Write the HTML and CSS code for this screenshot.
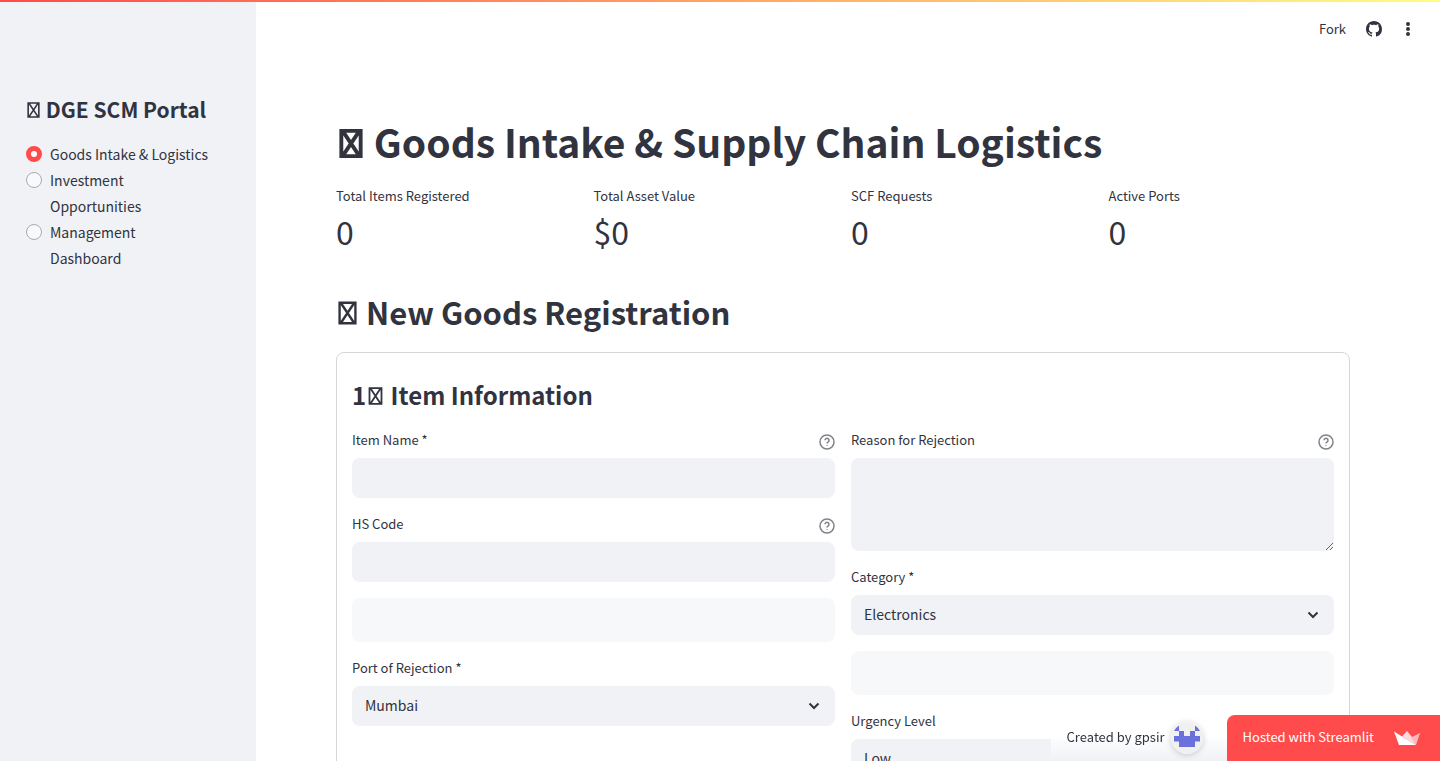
FILE: index.html
```
<!DOCTYPE html>
<html lang="en">
<head>
    <meta charset="UTF-8">
    <meta name="viewport" content="width=device-width, initial-scale=1.0">
    <title>DGE SCM Portal</title>
    <link rel="stylesheet" href="styles.css">
</head>
<body>
    <div class="decoration"></div>
    <div class="app">
        <aside class="sidebar">
            <h2 class="sidebar-title"><svg class="glyph" viewBox="0 0 24 30" aria-hidden="true"><path d="M2 2h20v26H2zM4 3l16 24M20 3L4 27"/></svg> DGE SCM Portal</h2>
            <nav class="nav">
                <label class="nav-item"><input type="radio" name="page" checked><span>Goods Intake &amp; Logistics</span></label>
                <label class="nav-item"><input type="radio" name="page"><span>Investment Opportunities</span></label>
                <label class="nav-item"><input type="radio" name="page"><span>Management Dashboard</span></label>
            </nav>
        </aside>

        <div class="view">
            <header class="toolbar">
                <button class="tool-btn" type="button">Fork</button>
                <a class="tool-link" href="#" aria-label="GitHub">
                    <svg width="16" height="16" viewBox="0 0 16 16" fill="currentColor"><path d="M8 0C3.58 0 0 3.58 0 8c0 3.54 2.29 6.53 5.47 7.59.4.07.55-.17.55-.38 0-.19-.01-.82-.01-1.49-2.01.37-2.53-.49-2.69-.94-.09-.23-.48-.94-.82-1.13-.28-.15-.68-.52-.01-.53.63-.01 1.08.58 1.23.82.72 1.21 1.87.87 2.33.66.07-.52.28-.87.51-1.07-1.78-.2-3.64-.89-3.64-3.95 0-.87.31-1.59.82-2.15-.08-.2-.36-1.02.08-2.12 0 0 .67-.21 2.2.82.64-.18 1.32-.27 2-.27s1.36.09 2 .27c1.53-1.04 2.2-.82 2.2-.82.44 1.1.16 1.92.08 2.12.51.56.82 1.27.82 2.15 0 3.07-1.87 3.75-3.65 3.95.29.25.54.73.54 1.48 0 1.07-.01 1.93-.01 2.2 0 .21.15.46.55.38A8.01 8.01 0 0 0 16 8c0-4.42-3.58-8-8-8z"/></svg>
                </a>
                <button class="tool-btn" type="button" aria-label="Menu">
                    <svg width="12" height="16" viewBox="0 0 12 16" fill="currentColor"><circle cx="6" cy="3" r="2"/><circle cx="6" cy="8" r="2"/><circle cx="6" cy="13" r="2"/></svg>
                </button>
            </header>

            <main class="main">
                <h1><svg class="glyph" viewBox="0 0 24 30" aria-hidden="true"><path d="M2 2h20v26H2zM4 3l16 24M20 3L4 27"/></svg> Goods Intake &amp; Supply Chain Logistics</h1>

                <div class="metrics">
                    <div class="metric">
                        <div class="metric-label">Total Items Registered</div>
                        <div class="metric-value">0</div>
                    </div>
                    <div class="metric">
                        <div class="metric-label">Total Asset Value</div>
                        <div class="metric-value">$0</div>
                    </div>
                    <div class="metric">
                        <div class="metric-label">SCF Requests</div>
                        <div class="metric-value">0</div>
                    </div>
                    <div class="metric">
                        <div class="metric-label">Active Ports</div>
                        <div class="metric-value">0</div>
                    </div>
                </div>

                <h2><svg class="glyph" viewBox="0 0 24 30" aria-hidden="true"><path d="M2 2h20v26H2zM4 3l16 24M20 3L4 27"/></svg> New Goods Registration</h2>

                <form class="form">
                    <h3>1<svg class="glyph" viewBox="0 0 24 30" aria-hidden="true"><path d="M2 2h20v26H2zM4 3l16 24M20 3L4 27"/></svg> Item Information</h3>
                    <div class="columns">
                        <div class="column">
                            <div class="field">
                                <div class="field-head">
                                    <label for="item-name">Item Name *</label>
                                    <svg class="help" viewBox="0 0 16 16"><circle cx="8" cy="8" r="7"/><path d="M6 6.3a2 2 0 1 1 3.2 1.6C8.4 8.4 8 8.7 8 9.5"/><path d="M8 11.2v.9"/></svg>
                                </div>
                                <input class="control" id="item-name" type="text">
                            </div>
                            <div class="field">
                                <div class="field-head">
                                    <label for="hs-code">HS Code</label>
                                    <svg class="help" viewBox="0 0 16 16"><circle cx="8" cy="8" r="7"/><path d="M6 6.3a2 2 0 1 1 3.2 1.6C8.4 8.4 8 8.7 8 9.5"/><path d="M8 11.2v.9"/></svg>
                                </div>
                                <input class="control" id="hs-code" type="text">
                            </div>
                            <div class="placeholder"></div>
                            <div class="field">
                                <div class="field-head"><label for="port">Port of Rejection *</label></div>
                                <div class="select">
                                    <select class="control" id="port"><option>Mumbai</option></select>
                                    <svg class="chevron" viewBox="0 0 12 8"><path d="M1.5 1.5L6 6l4.500-4.500"/></svg>
                                </div>
                            </div>
                        </div>
                        <div class="column">
                            <div class="field">
                                <div class="field-head">
                                    <label for="reason">Reason for Rejection</label>
                                    <svg class="help" viewBox="0 0 16 16"><circle cx="8" cy="8" r="7"/><path d="M6 6.3a2 2 0 1 1 3.2 1.6C8.4 8.4 8 8.7 8 9.5"/><path d="M8 11.2v.9"/></svg>
                                </div>
                                <textarea class="control" id="reason"></textarea>
                            </div>
                            <div class="field">
                                <div class="field-head"><label for="category">Category *</label></div>
                                <div class="select">
                                    <select class="control" id="category"><option>Electronics</option></select>
                                    <svg class="chevron" viewBox="0 0 12 8"><path d="M1.5 1.5L6 6l4.500-4.500"/></svg>
                                </div>
                            </div>
                            <div class="placeholder"></div>
                            <div class="field">
                                <div class="field-head"><label for="urgency">Urgency Level</label></div>
                                <div class="select">
                                    <select class="control" id="urgency"><option>Low</option></select>
                                    <svg class="chevron" viewBox="0 0 12 8"><path d="M1.5 1.5L6 6l4.500-4.500"/></svg>
                                </div>
                            </div>
                        </div>
                    </div>
                </form>
            </main>
        </div>
    </div>

    <div class="badges">
        <a class="creator" href="#">
            <span>Created by gpsir</span>
            <svg class="avatar" viewBox="0 0 32 32">
                <circle cx="16" cy="16" r="16" fill="#f0f0f0"/>
                <path fill="#6a70dc" d="M8 3.5V9H3a15 15 0 0 1 5-5.500zM24 3.5V9h5a15 15 0 0 0-5-5.500zM8 9h5v5h6V9h5v5h5v5.500h-5V25H8v-5.500H3V14h5z"/>
            </svg>
        </a>
        <a class="hosted" href="#">
            <span>Hosted with Streamlit</span>
            <svg width="26" height="16" viewBox="0 0 26 16">
                <path fill="#ffd9de" d="M8 6.500l5-5.500 5 6 4 8z"/>
                <path fill="#ffb8c0" d="M17 7.500L26 3l-4 12z"/>
                <path fill="#fff" d="M0 1.500l8 5L22 15H5z"/>
            </svg>
        </a>
    </div>
</body>
</html>
```
FILE: styles.css
```
* {
    box-sizing: border-box;
}
body {
    margin: 0;
    font-family: "Noto Sans CJK SC", "Noto Sans", sans-serif;
    font-size: 14px;
    line-height: 26px;
    color: #31333f;
    background: white;
}
.decoration {
    position: fixed;
    top: 0;
    left: 0;
    right: 0;
    height: 2px;
    background: linear-gradient(90deg, #ff4b4b, #fffd80);
    z-index: 3;
}
.app {
    display: flex;
    height: 100vh;
}
.glyph {
    width: 19px;
    height: 24px;
    margin: 0 2px;
    fill: none;
    stroke: currentColor;
    stroke-width: 3;
}
.sidebar {
    flex: 0 0 256px;
    padding: 95px 26px 24px;
    background: #f0f2f6;
}
.sidebar-title {
    margin: 0 0 18px;
    font-size: 21px;
    line-height: 28px;
    font-weight: 600;
}
.sidebar-title .glyph {
    width: 13px;
    height: 16px;
    margin: 0 1px;
}
.nav {
    padding-right: 20px;
}
.nav-item {
    display: flex;
    align-items: flex-start;
    gap: 8px;
    cursor: pointer;
}
.nav-item input {
    appearance: none;
    flex: 0 0 16px;
    height: 16px;
    margin: 5px 0 0;
    border: 1px solid #a8aab2;
    border-radius: 50%;
    background: #f9f9fb;
}
.nav-item input:checked {
    border: 5px solid #ff4b4b;
    background: white;
}
.view {
    flex: 1;
    min-width: 0;
    display: flex;
    flex-direction: column;
}
.toolbar {
    display: flex;
    align-items: center;
    justify-content: flex-end;
    gap: 20px;
    flex: 0 0 60px;
    padding: 0 26px 2px;
}
.tool-btn,
.tool-link {
    display: flex;
    align-items: center;
    padding: 0;
    border: none;
    background: none;
    color: inherit;
    font: inherit;
    font-size: 13px;
    cursor: pointer;
}
.main {
    flex: 1;
    min-height: 0;
    padding: 55px 90px 40px 80px;
    overflow-y: auto;
    scrollbar-width: none;
}
h1 {
    margin: 0 0 17px;
    font-size: 39px;
    line-height: 52px;
    font-weight: 700;
}
h1 .glyph {
    width: 24px;
    height: 29px;
    margin: 0 2px 0 3px;
    stroke-width: 4;
}
.metrics {
    display: grid;
    grid-template-columns: repeat(4, 1fr);
    gap: 16px;
}
.metric-label {
    font-size: 13px;
    line-height: 24px;
}
.metric-value {
    font-size: 32px;
    line-height: 46px;
}
.main h2 {
    margin: 36px 0 18px;
    font-size: 31px;
    line-height: 44px;
    font-weight: 600;
}
.form {
    padding: 25px 15px;
    border: 1px solid #d6d6d9;
    border-radius: 8px;
}
h3 {
    margin: 0 0 18px;
    font-size: 24px;
    line-height: 34px;
    font-weight: 600;
}
h3 .glyph {
    width: 15px;
    height: 18px;
}
.columns {
    display: grid;
    grid-template-columns: 1fr 1fr;
    gap: 16px;
}
.column {
    display: flex;
    flex-direction: column;
    gap: 16px;
}
.field-head {
    display: flex;
    justify-content: space-between;
    height: 24px;
    margin-bottom: 4px;
    font-size: 13px;
    line-height: 20px;
}
.help {
    align-self: center;
    width: 16px;
    height: 16px;
    fill: none;
    stroke: #808289;
    stroke-width: 1.5;
}
.control {
    display: block;
    width: 100%;
    height: 40px;
    padding: 0 13px 2px;
    border: none;
    border-radius: 8px;
    outline: none;
    appearance: none;
    background: #f0f2f6;
    color: inherit;
    font: inherit;
}
textarea.control {
    height: 93px;
    padding: 12px;
    resize: vertical;
}
.select {
    position: relative;
}
.chevron {
    position: absolute;
    top: 16px;
    right: 15px;
    width: 12px;
    height: 8px;
    fill: none;
    stroke: #31333f;
    stroke-width: 2;
    pointer-events: none;
}
.placeholder {
    height: 44px;
    border-radius: 8px;
    background: #f7f8fa;
}
.badges {
    position: fixed;
    right: 0;
    bottom: 0;
    display: flex;
    font-size: 13px;
    z-index: 2;
}
.badges a {
    display: flex;
    align-items: center;
    height: 46px;
    color: inherit;
    text-decoration: none;
}
.badges span {
    padding-bottom: 2px;
}
.creator {
    gap: 6px;
    padding: 0 24px 0 16px;
    background: linear-gradient(white 40%, rgba(255, 255, 255, 0));
}
.avatar {
    width: 32px;
    height: 32px;
    border-radius: 50%;
    box-shadow: 0 1px 6px rgba(0, 0, 0, 0.2);
}
.badges .hosted {
    gap: 20px;
    padding: 0 20px 0 16px;
    border-top-left-radius: 8px;
    background: #ff4b4b;
    color: white;
}
```
